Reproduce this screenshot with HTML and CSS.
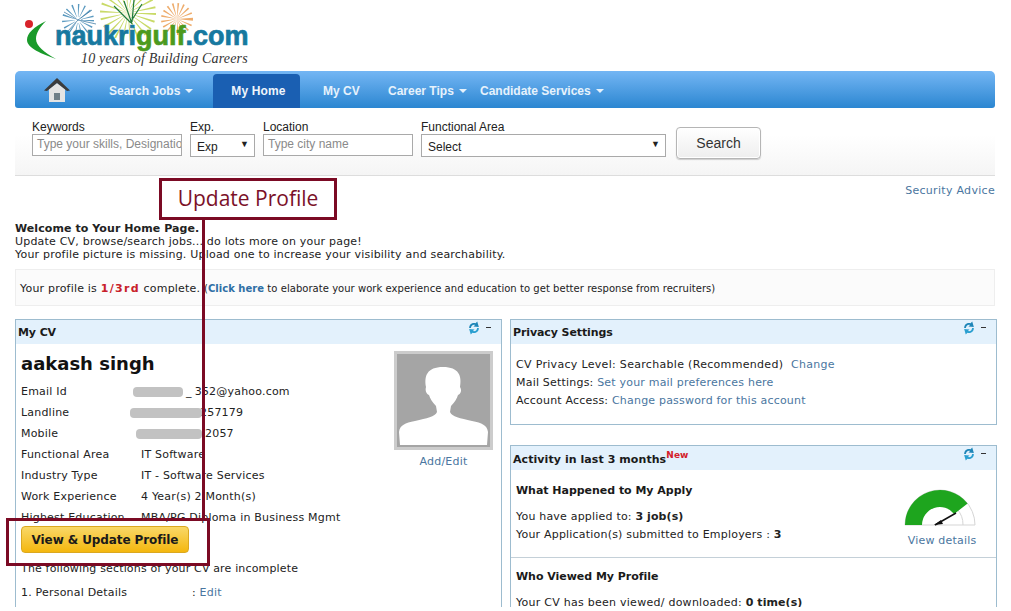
FILE: index.html
```html
<!DOCTYPE html>
<html lang="en">
<head>
<meta charset="utf-8">
<title>Naukrigulf - My Home</title>
<link rel="stylesheet" href="styles.css">
</head>
<body>
<div class="page">
  <header class="logo">
    <svg class="logo-svg" width="260" height="71" viewBox="0 0 260 71">
      <circle cx="78" cy="20" r="8" fill="none" stroke="#5b9ac0" stroke-width="16" stroke-dasharray=".8 2.6"/>
      <circle cx="78" cy="20" r="3" fill="#fff"/>
      <path d="M78 20 64 12M78 20 92 10M78 20 68 31M78 20 96 24" stroke="#2d6f9c" stroke-width=".7" fill="none"/>
      <circle cx="128" cy="13" r="14" fill="none" stroke="#c9da68" stroke-width="28" stroke-dasharray="1 3"/>
      <path d="M124 1 132 24M114 6 130 22M142 4 130 23M134 0 132 22" stroke="#1f7a3c" stroke-width="1.2" fill="none"/>
      <circle cx="177" cy="19" r="8" fill="none" stroke="#eeac6c" stroke-width="16" stroke-dasharray=".9 2"/>
      <circle cx="29" cy="24" r="4" fill="#d8232a"/>
      <path d="M46 21C34 27 27 33 27 40 27 48 42 54 56 59 44 52 36 46 36 39 36 33 40 27 46 21Z" fill="#1a9a2a"/>
      <text class="logo-name" x="55" y="45"><tspan fill="#17799f" stroke="#17799f">nauk</tspan><tspan fill="#17799f" stroke="#17799f">ri</tspan><tspan fill="#4c9a1e" stroke="#4c9a1e">gulf</tspan><tspan fill="#17799f" stroke="#17799f">.com</tspan></text>
      <text class="logo-tag" x="81" y="63">10 years of Building Careers</text>
    </svg>
  </header>

  <nav class="nav">
    <a class="nav-home">
      <svg width="26" height="24" viewBox="0 0 26 24">
        <path d="M5 11 13 5 21 11V24H5Z" fill="#e4e4e4"/>
        <path d="M10 15H16V22H10Z" fill="#6f7f88"/>
        <path d="M0 12.5 13 0 26 12.5 23 13 13 5 3 13Z" fill="#3c3c3c"/>
      </svg>
    </a>
    <a class="nav-item nav-search">Search Jobs<i class="caret"></i></a>
    <a class="nav-item nav-active">My Home</a>
    <a class="nav-item nav-cv">My CV</a>
    <a class="nav-item nav-tips">Career Tips<i class="caret"></i></a>
    <a class="nav-item nav-services">Candidate Services<i class="caret"></i></a>
  </nav>

  <section class="search">
    <label class="field f-key"><span>Keywords</span><div class="input ph">Type your skills, Designation</div></label>
    <label class="field f-exp"><span>Exp.</span><div class="select">Exp<i class="arrow">▼</i></div></label>
    <label class="field f-loc"><span>Location</span><div class="input ph">Type city name</div></label>
    <label class="field f-area"><span>Functional Area</span><div class="select">Select<i class="arrow">▼</i></div></label>
    <button class="search-btn">Search</button>
  </section>

  <div class="security"><a>Security Advice</a></div>

  <section class="welcome">
    <b>Welcome to Your Home Page.</b><br>
    Update CV, browse/search jobs... do lots more on your page!<br>
    Your profile picture is missing. Upload one to increase your visibility and searchability.
  </section>

  <section class="complete">Your profile is <b class="red">1/3rd</b> complete. <span class="small">(<a class="bold-link">Click here</a> to elaborate your work experience and education to get better response from recruiters)</span></section>

  <div class="cols">
    <section class="panel panel-cv">
      <h2 class="panel-head">My CV
        <span class="tools"><svg class="refresh" width="14" height="14" viewBox="0 0 13 13"><path d="M2 6.5C2 3 5 1.2 8 2L9.5 .5 11 5.5 6 5 7.5 3.6C5.5 3 3.8 4.3 3.6 6.5Z" fill="#1f86b8"/><path d="M11 6.5C11 10 8 11.8 5 11L3.5 12.5 2 7.5 7 8 5.5 9.4C7.5 10 9.2 8.7 9.4 6.5Z" fill="#2a9fd0"/></svg><i class="dash"></i></span>
      </h2>
      <div class="cv-body">
        <div class="cv-top">
          <div class="cv-info">
            <h1 class="cv-name">aakash singh</h1>
            <dl class="cv-rows">
              <div class="cv-row"><dt>Email Id</dt><dd><i class="mask m-email"></i><span class="v-under">_</span><span class="v-email">352@yahoo.com</span></dd></div>
              <div class="cv-row"><dt>Landline</dt><dd><i class="mask m-land"></i><span class="v-land">257179</span></dd></div>
              <div class="cv-row"><dt>Mobile</dt><dd><i class="mask m-mob"></i><span class="v-mob">2057</span></dd></div>
              <div class="cv-row"><dt>Functional Area</dt><dd>IT Software</dd></div>
              <div class="cv-row"><dt>Industry Type</dt><dd>IT - Software Services</dd></div>
              <div class="cv-row"><dt>Work Experience</dt><dd>4 Year(s) 2 Month(s)</dd></div>
              <div class="cv-row"><dt>Highest Education</dt><dd>MBA/PG Diploma in Business Mgmt</dd></div>
            </dl>
          </div>
          <div class="cv-photo">
            <div class="photo">
              <svg width="93" height="93" viewBox="0 0 93 93">
                <path d="M3 91 2 78C3 71 8 69 18 67 30 64 38 63 40 58L39 52C35 48 33 44 32 41 29 40 28 36 29 33 27 22 30 13 46 13 62 13 65 22 63 33 65 36 64 40 61 41 60 44 58 48 54 52L53 58C55 63 63 64 75 67 85 69 90 71 91 78L90 91Z" fill="#fff"/>
              </svg>
            </div>
            <a class="add-edit">Add/Edit</a>
          </div>
        </div>
        <a class="update-btn">View &amp; Update Profile</a>
        <p class="incomplete">The following sections of your CV are incomplete</p>
        <div class="todo"><span class="todo-name">1. Personal Details</span><span>: <a>Edit</a></span></div>
      </div>
    </section>

    <div class="col-right">
      <section class="panel panel-privacy">
        <h2 class="panel-head">Privacy Settings
          <span class="tools"><svg class="refresh" width="14" height="14" viewBox="0 0 13 13"><path d="M2 6.5C2 3 5 1.2 8 2L9.5 .5 11 5.5 6 5 7.5 3.6C5.5 3 3.8 4.3 3.6 6.5Z" fill="#1f86b8"/><path d="M11 6.5C11 10 8 11.8 5 11L3.5 12.5 2 7.5 7 8 5.5 9.4C7.5 10 9.2 8.7 9.4 6.5Z" fill="#2a9fd0"/></svg><i class="dash"></i></span>
        </h2>
        <div class="privacy-body">
          <p class="privacy-level">CV Privacy Level: Searchable (Recommended) &nbsp;<a>Change</a></p>
          <p>Mail Settings: <a>Set your mail preferences here</a></p>
          <p>Account Access: <a>Change password for this account</a></p>
        </div>
      </section>

      <section class="panel panel-activity">
        <h2 class="panel-head">Activity in last 3 months<sup class="new">New</sup>
          <span class="tools"><svg class="refresh" width="14" height="14" viewBox="0 0 13 13"><path d="M2 6.5C2 3 5 1.2 8 2L9.5 .5 11 5.5 6 5 7.5 3.6C5.5 3 3.8 4.3 3.6 6.5Z" fill="#1f86b8"/><path d="M11 6.5C11 10 8 11.8 5 11L3.5 12.5 2 7.5 7 8 5.5 9.4C7.5 10 9.2 8.7 9.4 6.5Z" fill="#2a9fd0"/></svg><i class="dash"></i></span>
        </h2>
        <div class="apply">
          <div class="apply-text">
            <h3>What Happened to My Apply</h3>
            <p>You have applied to: <b>3 job(s)</b></p>
            <p>Your Application(s) submitted to Employers : <b>3</b></p>
          </div>
          <div class="gauge">
            <svg width="72" height="38" viewBox="0 0 72 38">
              <path d="M1 36A35 35 0 0 1 71 36H1M59 36A23 23 0 0 0 53 20" fill="none" stroke="#d5d5d5"/>
              <path d="M9.5 36A26.5 26.5 0 0 1 56.9 19.7" fill="none" stroke="#1ea51e" stroke-width="17"/>
              <path d="M31 36 52 24" stroke="#111" stroke-width="1.5"/>
              <path d="M30 36 37 31 39 35Z" fill="#111"/>
            </svg>
            <a>View details</a>
          </div>
        </div>
        <div class="viewed">
          <h3>Who Viewed My Profile</h3>
          <p>Your CV has been viewed/ downloaded: <b>0 time(s)</b></p>
        </div>
      </section>
    </div>
  </div>

  <div class="callout">Update Profile</div>
  <div class="callout-line"></div>
  <div class="callout-box"></div>
</div>
</body>
</html>
```

FILE: styles.css
```css
* { box-sizing: border-box; }
html, body { margin: 0; padding: 0; background: #fff; }
body { font: 11px/13px "DejaVu Sans", Verdana, sans-serif; letter-spacing: .2px; color: #222; overflow: hidden; }
a { color: #4a76a0; text-decoration: none; }
b { letter-spacing: .08px; }
i { font-style: normal; }
h1, h2, h3, p, dl, dd { margin: 0; }

.page { position: relative; width: 1011px; height: 607px; padding: 0 15px; overflow: hidden; background: #fff; }

/* logo */
.logo { height: 71px; margin-left: -15px; }
.logo-svg { display: block; overflow: hidden; }
.logo-name { font: bold 27px "Liberation Sans", Arial, sans-serif; letter-spacing: 0; stroke-width: .7px; }
.logo-tag { font: italic 14px "Liberation Serif", serif; fill: #333; letter-spacing: .17px; }

/* nav */
.nav { display: flex; align-items: stretch; width: 980px; height: 37px; background: linear-gradient(#74b6f4, #2b86d1); border-radius: 5px 5px 3px 3px; }
.nav-home { display: flex; align-items: center; width: 94px; padding: 0 0 0 29px; }
.nav-item { display: flex; align-items: center; letter-spacing: 0; padding-top: 2px; color: #e6f2fc; font: bold 12px "Liberation Sans", Arial, sans-serif; }
.nav-search { width: 104px; }
.nav-active { width: 87px; height: 34px; margin-top: 3px; padding: 0 0 0 4px; justify-content: center; letter-spacing: .15px; color: #eef5fc; background: #1a5fb2; border-radius: 4px 4px 0 0; }
.nav-cv { width: 88px; padding-left: 23px; }
.nav-tips { width: 92px; }
.caret { display: inline-block; margin-left: 5px; border: 4px solid transparent; border-top-color: #e6f2fc; border-bottom: 0; }

/* search */
.search { display: flex; align-items: flex-start; width: 980px; height: 68px; padding: 12px 0 0 17px; background: linear-gradient(#fff 40%, #f5f5f5); border-bottom: 1px solid #ddd; font: 12px/14px "Liberation Sans", Arial, sans-serif; letter-spacing: 0; color: #222; }
.field { display: flex; flex-direction: column; margin-right: 8px; }
.input, .select { height: 22px; border: 1px solid #a9a9a9; background: #fff; padding-left: 4px; line-height: 19px; white-space: nowrap; overflow: hidden; }
.select { position: relative; height: 23px; padding: 1px 0 0 6px; line-height: 23px; }
.ph { color: #8a8a8a; }
.arrow { position: absolute; right: 5px; top: -1px; font-size: 9px; line-height: 21px; color: #222; }
.f-key { width: 150px; }
.f-exp { width: 65px; }
.f-loc { width: 150px; }
.f-area { width: 245px; }
.search-btn { width: 85px; height: 32px; margin: 7px 0 0 2px; font: 14px "Liberation Sans", Arial, sans-serif; color: #333; background: linear-gradient(#fff, #eee); border: 1px solid #b5b5b5; border-radius: 4px; box-shadow: inset 0 0 0 1px #fff, 0 1px 1px #ccc; }

/* intro */
.security { width: 980px; height: 46px; padding-top: 8px; text-align: right; letter-spacing: .3px; }
.welcome { height: 47px; }
.complete { width: 980px; height: 37px; padding-left: 4px; line-height: 37px; white-space: nowrap; background: #fbfbfb; border: 1px solid #eee; }
.red { letter-spacing: 1.3px; color: #c8202a; }
.small { font-size: 10px; letter-spacing: .04px; }
.bold-link { font-weight: bold; color: #2f6fa5; }

/* columns */
.cols { display: grid; grid-template-columns: 487px 487px; gap: 8px; width: 982px; margin-top: 13px; }
.panel { border: 1px solid #9dbccf; background: #fff; }
.panel-head { position: relative; height: 24px; padding: 0 0 0 2px; font-size: 11px; line-height: 25px; font-weight: bold; letter-spacing: -.1px; color: #1a1a1a; background: #e3f1fc; }
.panel-activity .panel-head { line-height: 27px; letter-spacing: .07px; }
.tools { position: absolute; top: 0; right: 10px; display: flex; gap: 5px; }
.refresh { margin-top: 1px; }
.dash { width: 5px; height: 1px; margin-top: 7px; background: #333; }
.new { position: absolute; margin-top: 3px; font-size: 9px; line-height: 12px; letter-spacing: .1px; color: #d3202a; }

/* CV */
.panel-cv { height: 300px; }
.cv-body { padding: 0 0 0 5px; }
.cv-top { display: flex; }
.cv-info { width: 373px; }
.cv-name { margin-top: 10px; font-size: 18px; line-height: 20px; letter-spacing: 0; color: #111; }
.cv-rows { margin-top: 7px; }
.cv-row { display: flex; line-height: 21px; }
.cv-row dt { width: 120px; }
.cv-row dd { position: relative; white-space: nowrap; }
.mask { position: absolute; top: 6px; height: 10px; background: #c2c2c2; border-radius: 4px; filter: blur(.6px); }
.m-email { left: -8px; width: 50px; }
.m-land { left: -11px; width: 72px; }
.m-mob { left: -5px; width: 66px; }
.v-under { margin-left: 45px; }
.v-email { margin-left: 3px; }
.v-land { margin-left: 59px; }
.v-mob { margin-left: 64px; }
.cv-photo { display: flex; flex-direction: column; align-items: center; width: 99px; padding-top: 7px; }
.photo { width: 99px; height: 99px; padding: 0; border: 3px solid #ccc; background: #a5a5a5; overflow: hidden; }
.photo svg { display: block; }
.add-edit { margin-top: 5px; }
.update-btn { display: block; width: 168px; height: 27px; margin-top: -2px; font-size: 12px; font-weight: bold; line-height: 26px; letter-spacing: -.1px; text-align: center; color: #1a1a1a; background: linear-gradient(#f9d868, #f4b70e); border: 1px solid #dba820; border-radius: 4px; }
.incomplete { margin-top: 9px; letter-spacing: .16px; }
.todo { display: flex; margin-top: 11px; }
.todo-name { width: 171px; }

/* right column */
.col-right { display: flex; flex-direction: column; gap: 20px; }
.panel-privacy { height: 106px; }
.privacy-body { padding: 12px 0 0 5px; }
.privacy-body p { line-height: 18px; }
.privacy-body .privacy-level { letter-spacing: .31px; }
.panel-activity { height: 170px; }
.apply { display: flex; justify-content: space-between; height: 88px; padding: 14px 20px 0 5px; border-bottom: 1px solid #c4d0d8; }
.apply h3, .viewed h3 { font-size: 11px; line-height: 13px; letter-spacing: -.03px; color: #1a1a1a; }
.apply p { line-height: 18px; }
.apply h3 + p { margin-top: 11px; }
.gauge { display: flex; flex-direction: column; align-items: center; width: 72px; padding-top: 5px; }
.gauge a { margin: 7px 0 0 4px; white-space: nowrap; }
.viewed { padding: 12px 0 0 5px; }
.viewed p { margin-top: 13px; letter-spacing: .26px; }

/* annotation overlays */
.callout { position: absolute; left: 159px; top: 178px; width: 178px; height: 42px; border: 3px solid #7b0a24; background: #fff; font: 21px/34px "Open Sans", sans-serif; letter-spacing: 0; text-align: center; color: #7b1128; }
.callout-line { position: absolute; left: 202px; top: 220px; width: 3px; height: 298px; background: #7b0a24; }
.callout-box { position: absolute; left: 6px; top: 518px; width: 204px; height: 48px; border: 3px solid #7b0a24; }
```
